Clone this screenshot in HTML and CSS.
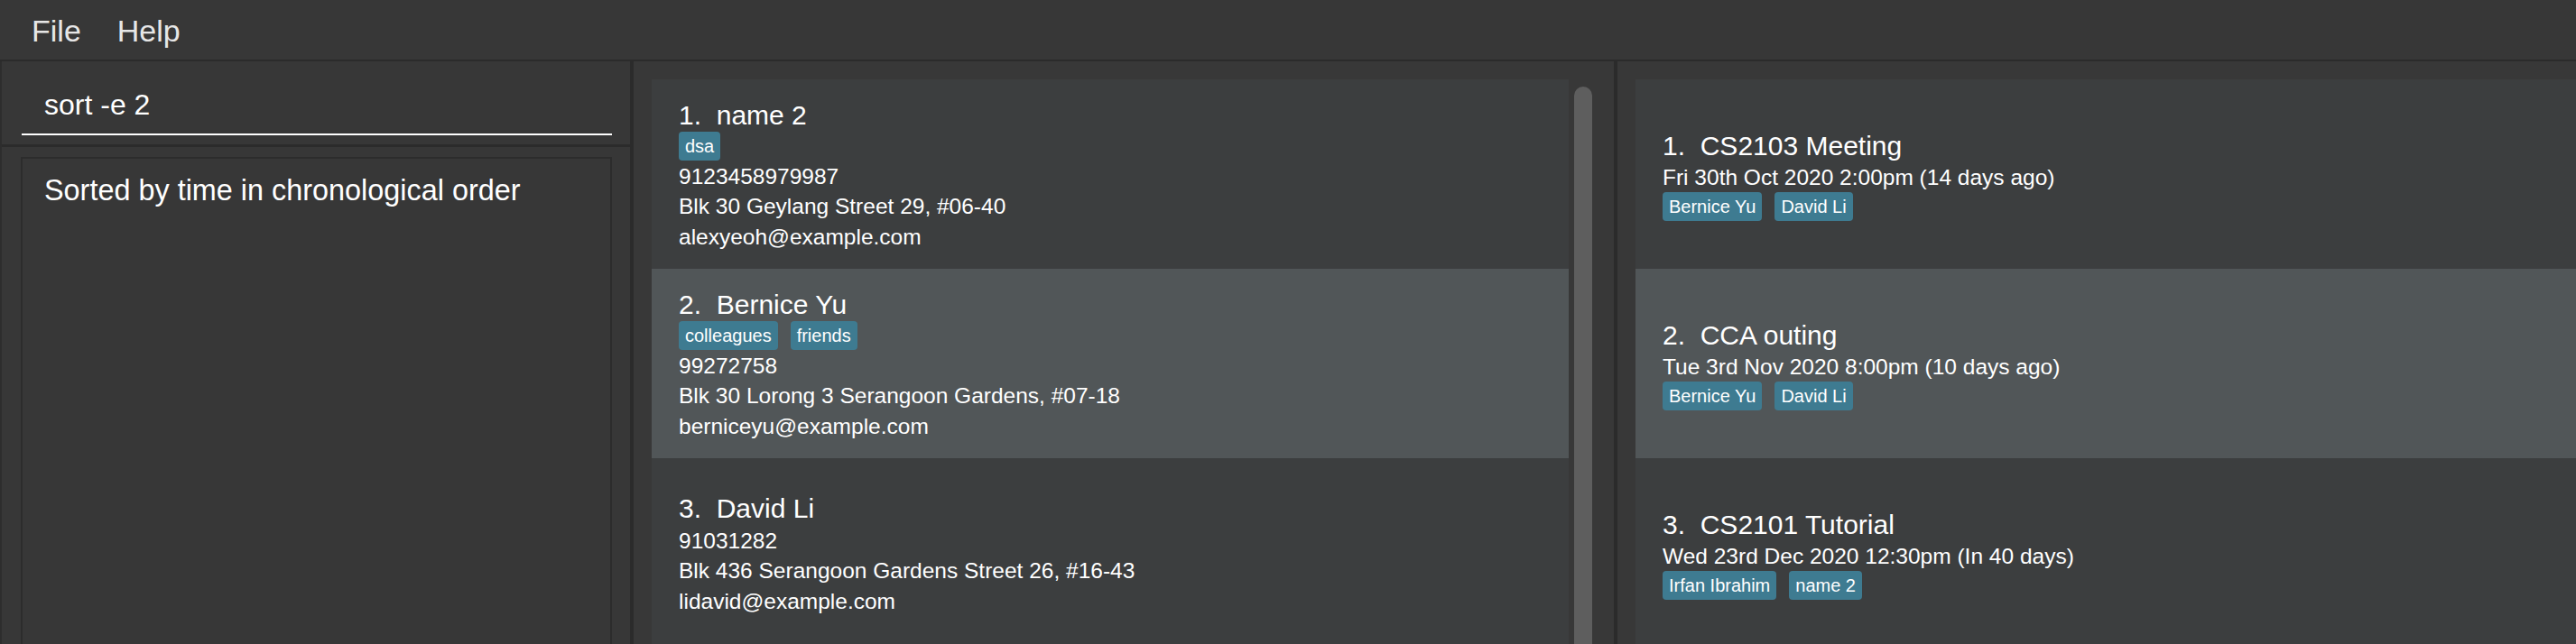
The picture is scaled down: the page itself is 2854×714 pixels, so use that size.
FILE: index.html
```html
<!DOCTYPE html>
<html lang="en">
<head>
<meta charset="utf-8">
<title>Address Book</title>
<link rel="stylesheet" href="styles.css">
</head>
<body>
<div class="app">
  <nav class="menubar">
    <span class="menu-item">File</span>
    <span class="menu-item">Help</span>
  </nav>
  <div class="main">
    <section class="left">
      <div class="cmd">
        <div class="cmd-field">sort -e 2</div>
      </div>
      <div class="result">
        <div class="result-box">Sorted by time in chronological order</div>
      </div>
    </section>
    <div class="divider"></div>
    <section class="persons">
      <div class="list">
        <div class="card">
          <div class="name"><span class="idx">1.  </span>name 2</div>
          <div class="tags"><span class="tag">dsa</span></div>
          <div class="details">
            <div class="detail">9123458979987</div>
            <div class="detail">Blk 30 Geylang Street 29, #06-40</div>
            <div class="detail">alexyeoh@example.com</div>
          </div>
        </div>
        <div class="card odd">
          <div class="name"><span class="idx">2.  </span>Bernice Yu</div>
          <div class="tags"><span class="tag">colleagues</span><span class="tag">friends</span></div>
          <div class="details">
            <div class="detail">99272758</div>
            <div class="detail">Blk 30 Lorong 3 Serangoon Gardens, #07-18</div>
            <div class="detail">berniceyu@example.com</div>
          </div>
        </div>
        <div class="card">
          <div class="name"><span class="idx">3.  </span>David Li</div>
          <div class="details">
            <div class="detail">91031282</div>
            <div class="detail">Blk 436 Serangoon Gardens Street 26, #16-43</div>
            <div class="detail">lidavid@example.com</div>
          </div>
        </div>
      </div>
      <div class="scroll-track"><div class="scroll-thumb"></div></div>
    </section>
    <div class="divider"></div>
    <section class="events">
      <div class="list">
        <div class="card">
          <div class="name"><span class="idx">1.  </span>CS2103 Meeting</div>
          <div class="detail date">Fri 30th Oct 2020 2:00pm (14 days ago)</div>
          <div class="tags"><span class="tag">Bernice Yu</span><span class="tag">David Li</span></div>
        </div>
        <div class="card odd">
          <div class="name"><span class="idx">2.  </span>CCA outing</div>
          <div class="detail date">Tue 3rd Nov 2020 8:00pm (10 days ago)</div>
          <div class="tags"><span class="tag">Bernice Yu</span><span class="tag">David Li</span></div>
        </div>
        <div class="card">
          <div class="name"><span class="idx">3.  </span>CS2101 Tutorial</div>
          <div class="detail date">Wed 23rd Dec 2020 12:30pm (In 40 days)</div>
          <div class="tags"><span class="tag">Irfan Ibrahim</span><span class="tag">name 2</span></div>
        </div>
      </div>
    </section>
  </div>
</div>
</body>
</html>
```

FILE: styles.css
```css
* {
  box-sizing: border-box;
}

html, body {
  margin: 0;
  padding: 0;
  background: #383838;
  overflow: hidden;
}

body {
  font-family: "Liberation Sans", Arial, sans-serif;
  color: #ffffff;
}

.app {
  width: 2854px;
  height: 714px;
  display: flex;
  flex-direction: column;
  overflow: hidden;
}

.menubar {
  height: 68px;
  flex: none;
  background: #373737;
  border-bottom: 2px solid #2b2b2b;
  display: flex;
  gap: 40px;
  padding: 2px 0 0 35px;
}

.menu-item {
  font-size: 34px;
  line-height: 64px;
  color: rgba(255, 255, 255, 0.9);
}

.main {
  flex: 1;
  display: flex;
  min-height: 0;
}

.left {
  width: 698px;
  flex: none;
  border-left: 2px solid #2d2d2d;
  display: flex;
  flex-direction: column;
  background: #373737;
}

.cmd {
  height: 95px;
  flex: none;
  border-bottom: 3px solid #2b2b2b;
  padding: 28px 20px 0 22px;
}

.cmd-field {
  font-size: 32px;
  line-height: 40px;
  padding: 0 0 12px 25px;
  border-bottom: 2px solid #ffffff;
  color: #ffffff;
}

.result {
  flex: 1;
  padding: 11px 20px 0 21px;
  overflow: hidden;
}

.result-box {
  height: 620px;
  border: 2px solid #2c2c2c;
  padding: 16px 0 0 24px;
  font-size: 32.4px;
  line-height: 38px;
  color: #ffffff;
}

.divider {
  width: 4px;
  flex: none;
  background: #2b2b2b;
}

.persons {
  width: 1086px;
  flex: none;
  display: flex;
  padding: 20px 24px 0 20px;
  overflow: hidden;
}

.persons .list {
  width: 1016px;
  flex: none;
}

.scroll-track {
  width: 26px;
  flex: none;
  padding: 8px 0 0 6px;
  background: #383838;
}

.scroll-thumb {
  width: 20px;
  height: 700px;
  border-radius: 10px;
  background: #5e5e5e;
}

.events {
  flex: 1;
  padding: 20px 0 0 20px;
  overflow: hidden;
}

.card {
  height: 210px;
  padding: 3px 0 0 30px;
  display: flex;
  flex-direction: column;
  justify-content: center;
  background: #3c3e3f;
}

.card.odd {
  background: #515658;
}

.name {
  font-size: 30px;
  line-height: 36px;
  white-space: pre;
}

.tags {
  display: flex;
  gap: 14px;
  height: 32px;
}

.tag {
  font-size: 20px;
  line-height: 32px;
  padding: 0 7px;
  border-radius: 4px;
  background: #3e7b91;
  color: #ffffff;
}

.details {
  margin-top: 1px;
}

.detail {
  font-size: 24.5px;
  line-height: 33.3px;
  white-space: nowrap;
}
```
